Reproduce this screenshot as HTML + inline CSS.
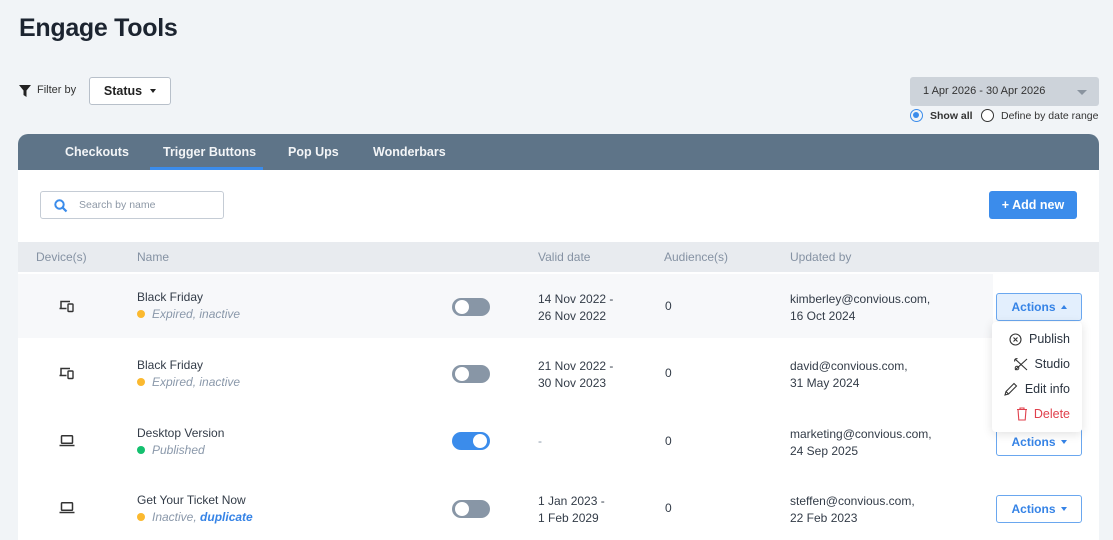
<!DOCTYPE html>
<html><head><meta charset="utf-8"><style>
*{box-sizing:border-box;margin:0;padding:0}
html{width:1113px;height:540px;overflow:hidden}
body{width:1113px;height:540px;overflow:hidden;background:#f1f4f7;font-family:"Liberation Sans",sans-serif;color:#2b3440;position:relative}
.abs{position:absolute}
h1{position:absolute;left:19px;top:14px;font-size:25px;font-weight:700;color:#1c2430;letter-spacing:-0.3px}
.card{position:absolute;left:18px;top:134px;width:1081px;height:406px;background:#fff;border-radius:10px 10px 0 0;overflow:hidden}
.tabs{height:36px;background:#5e7488;position:relative}
.tab{position:absolute;top:11px;color:#f3f5f7;font-size:12.5px;font-weight:700}
.thead{position:absolute;left:0;top:108px;width:1081px;height:30px;background:#e8ebef;font-size:12px;color:#8592a3}
.thead span{position:absolute;top:8px}
.row{position:absolute;left:0;width:1081px;height:67px;font-size:12px;color:#333c48}
.row .t{position:absolute;line-height:17px}
.st{font-style:italic;color:#8a98aa}
.dot{display:inline-block;width:8px;height:8px;border-radius:50%;margin-right:7px;vertical-align:0}
.tg{position:absolute;width:38px;height:18px;border-radius:9px;background:#8896a6}
.tg::after{content:"";position:absolute;top:2px;left:3px;width:14px;height:14px;border-radius:50%;background:#fff}
.tg.on{background:#3b8ceb}.tg.on::after{left:21px}
.act{position:absolute;left:978px;width:86px;height:28px;border:1px solid #6aa7ef;border-radius:3px;color:#3583e6;font-size:12px;font-weight:700;text-align:center;line-height:26px;background:#fff}
.tri{display:inline-block;width:0;height:0;border-left:3.5px solid transparent;border-right:3.5px solid transparent;margin-left:5px;vertical-align:2px}
.dn{border-top:4px solid currentColor}.up{border-bottom:4px solid currentColor}
.menu{position:absolute;left:992px;top:322px;width:90px;height:110px;background:#fff;border-radius:4px;box-shadow:0 2px 10px rgba(0,0,0,.12);font-size:12.5px;color:#2b3440}
.menu div{position:absolute;right:12px}
</style></head><body>
<h1>Engage Tools</h1>
<svg class="abs" style="left:19px;top:85px" width="12" height="12" viewBox="0 0 12 12"><path d="M0 0H12L7.5 5.5V12L4.5 10V5.5Z" fill="#222"/></svg>
<div class="abs" style="left:37px;top:84px;font-size:11px;color:#333">Filter by</div>
<div class="abs" style="left:89px;top:77px;width:82px;height:28px;border:1px solid #b8c0ca;border-radius:3px;background:#fff;font-size:12.5px;font-weight:700;text-align:center;line-height:26px;color:#222">Status<span class="tri dn" style="margin-left:8px"></span></div>
<div class="abs" style="left:910px;top:77px;width:189px;height:29px;background:#cdd3da;border-radius:3px;font-size:11px;color:#333;line-height:28px;padding-left:13px">1 Apr 2026 - 30 Apr 2026<span class="tri dn" style="position:absolute;right:12px;top:13px;color:#8a949f;border-left-width:5px;border-right-width:5px;border-top-width:5px"></span></div>
<div class="abs" style="left:910px;top:109px;width:13px;height:13px;border:1.5px solid #3b8ceb;border-radius:50%"><div style="margin:2px;width:6px;height:6px;border-radius:50%;background:#3b8ceb"></div></div>
<div class="abs" style="left:930px;top:110px;font-size:10.5px;font-weight:700;color:#333">Show all</div>
<div class="abs" style="left:981px;top:109px;width:13px;height:13px;border:1px solid #333;border-radius:50%;background:#fff"></div>
<div class="abs" style="left:1001px;top:110px;font-size:10.5px;color:#333">Define by date range</div>
<div class="card">
<div class="tabs">
<span class="tab" style="left:47px">Checkouts</span>
<span class="tab" style="left:145px">Trigger Buttons</span>
<span class="tab" style="left:270px">Pop Ups</span>
<span class="tab" style="left:355px">Wonderbars</span>
<div class="abs" style="left:132px;top:33px;width:113px;height:3px;background:#3b8ceb"></div>
</div>
<div class="abs" style="left:22px;top:57px;width:184px;height:28px;border:1px solid #c5ccd5;border-radius:3px"></div>
<svg class="abs" style="left:36px;top:65px" width="14" height="14" viewBox="0 0 14 14"><circle cx="5.5" cy="5.5" r="4.2" fill="none" stroke="#3b8ceb" stroke-width="2"/><path d="M8.7 8.7L12.5 12.5" stroke="#3b8ceb" stroke-width="2.2"/></svg>
<div class="abs" style="left:61px;top:65px;font-size:10.5px;color:#8d98a6">Search by name</div>
<div class="abs" style="left:971px;top:57px;width:88px;height:28px;background:#3b8ceb;border-radius:3px;color:#fff;font-size:12.5px;font-weight:700;text-align:center;line-height:28px">+ Add new</div>
<div class="thead"><span style="left:18px">Device(s)</span><span style="left:119px">Name</span><span style="left:520px">Valid date</span><span style="left:646px">Audience(s)</span><span style="left:772px">Updated by</span></div>
</div>
<div class="abs" style="left:18px;top:274px;width:975px;height:64px;background:#f7f8fa"></div>
<div class="abs" style="left:18px;top:272px;width:1081px;height:268px;font-size:12px;overflow:hidden">
<div class="row" style="top:0">
<svg class="abs" style="left:41px;top:27px" width="16" height="14" viewBox="0 0 16 14"><path d="M2 9V2.5H11M0.5 9.5H7.5" fill="none" stroke="#333" stroke-width="1.5"/><rect x="9" y="5" width="5" height="7.5" rx="0.8" fill="none" stroke="#333" stroke-width="1.4"/></svg>
<div class="t" style="left:119px;top:17px">Black Friday<br><span class="st"><span class="dot" style="background:#fbb92f"></span>Expired, inactive</span></div>
<div class="tg" style="left:434px;top:26px"></div>
<div class="t" style="left:520px;top:19px">14 Nov 2022 -<br>26 Nov 2022</div>
<div class="t" style="left:647px;top:26px">0</div>
<div class="t" style="left:772px;top:19px">kimberley@convious.com,<br>16 Oct 2024</div>
<div class="act" style="top:21px;background:#e3effd">Actions<span class="tri up"></span></div>
</div>
<div class="row" style="top:67px">
<svg class="abs" style="left:41px;top:27px" width="16" height="14" viewBox="0 0 16 14"><path d="M2 9V2.5H11M0.5 9.5H7.5" fill="none" stroke="#333" stroke-width="1.5"/><rect x="9" y="5" width="5" height="7.5" rx="0.8" fill="none" stroke="#333" stroke-width="1.4"/></svg>
<div class="t" style="left:119px;top:18px">Black Friday<br><span class="st"><span class="dot" style="background:#fbb92f"></span>Expired, inactive</span></div>
<div class="tg" style="left:434px;top:26px"></div>
<div class="t" style="left:520px;top:19px">21 Nov 2022 -<br>30 Nov 2023</div>
<div class="t" style="left:647px;top:26px">0</div>
<div class="t" style="left:772px;top:19px">david@convious.com,<br>31 May 2024</div>
</div>
<div class="row" style="top:135px">
<svg class="abs" style="left:41px;top:28px" width="16" height="12" viewBox="0 0 16 12"><rect x="2.5" y="0.8" width="11" height="7.5" rx="0.8" fill="none" stroke="#333" stroke-width="1.5"/><path d="M0.5 10.5H15.5" stroke="#333" stroke-width="1.5"/></svg>
<div class="t" style="left:119px;top:18px">Desktop Version<br><span class="st"><span class="dot" style="background:#14c06f"></span>Published</span></div>
<div class="tg on" style="left:434px;top:25px"></div>
<div class="t" style="left:520px;top:26px;color:#8a98aa">-</div>
<div class="t" style="left:647px;top:26px">0</div>
<div class="t" style="left:772px;top:19px">marketing@convious.com,<br>24 Sep 2025</div>
<div class="act" style="top:21px">Actions<span class="tri dn"></span></div>
</div>
<div class="row" style="top:202px">
<svg class="abs" style="left:41px;top:28px" width="16" height="12" viewBox="0 0 16 12"><rect x="2.5" y="0.8" width="11" height="7.5" rx="0.8" fill="none" stroke="#333" stroke-width="1.5"/><path d="M0.5 10.5H15.5" stroke="#333" stroke-width="1.5"/></svg>
<div class="t" style="left:119px;top:18px">Get Your Ticket Now<br><span class="st"><span class="dot" style="background:#fbb92f"></span>Inactive, <b style="color:#3583e6">duplicate</b></span></div>
<div class="tg" style="left:434px;top:26px"></div>
<div class="t" style="left:520px;top:19px">1 Jan 2023 -<br>1 Feb 2029</div>
<div class="t" style="left:647px;top:26px">0</div>
<div class="t" style="left:772px;top:19px">steffen@convious.com,<br>22 Feb 2023</div>
<div class="act" style="top:21px">Actions<span class="tri dn"></span></div>
</div>
</div>
<div class="menu">
<svg class="abs" style="left:17px;top:11px" width="13" height="13" viewBox="0 0 13 13"><circle cx="6.5" cy="6.5" r="5.5" fill="none" stroke="#333" stroke-width="1.1"/><path d="M4.5 4.5L8.5 8.5M8.5 4.5L4.5 8.5" stroke="#333" stroke-width="1.1"/></svg>
<div style="top:10px">Publish</div>
<svg class="abs" style="left:22px;top:36px" width="14" height="13" viewBox="0 0 14 13"><path d="M1 1L13 12M13 1L1 12M1 1L3.5 0.5M1 1L0.5 3.5" fill="none" stroke="#333" stroke-width="1.1"/><circle cx="3" cy="10" r="1.8" fill="none" stroke="#333"/></svg>
<div style="top:35px">Studio</div>
<svg class="abs" style="left:12px;top:60px" width="14" height="14" viewBox="0 0 14 14"><path d="M1 13L2 9.5L10 1.5L12.5 4L4.5 12Z M2 9.5L4.5 12" fill="none" stroke="#333" stroke-width="1.1"/></svg>
<div style="top:60px">Edit info</div>
<svg class="abs" style="left:24px;top:85px" width="12" height="14" viewBox="0 0 12 14"><path d="M1 2.5H11M4 2.5V1H8V2.5M2 2.5L2.8 13H9.2L10 2.5" fill="none" stroke="#e0404c" stroke-width="1.1"/></svg>
<div style="top:85px;color:#e0404c">Delete</div>
</div>
</body></html>
